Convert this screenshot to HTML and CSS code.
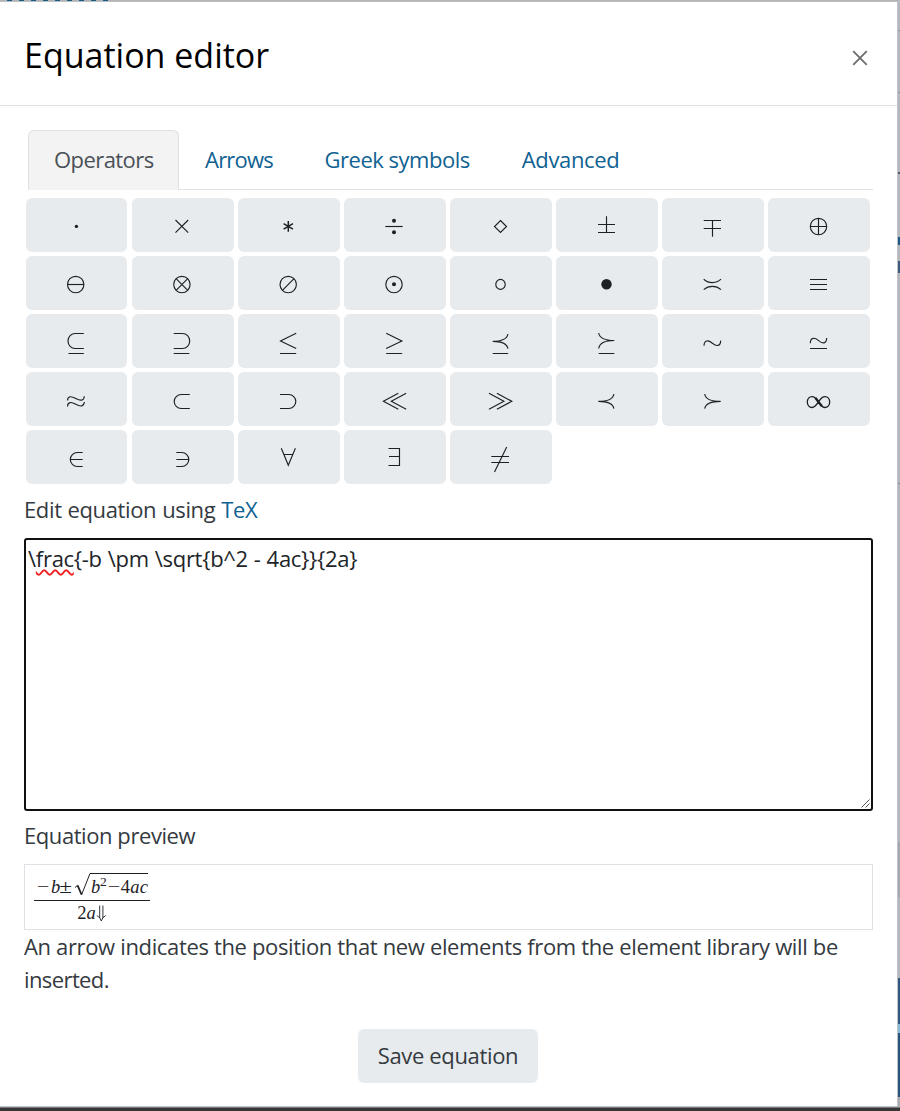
FILE: index.html
```html
<!DOCTYPE html>
<html lang="en">
<head>
<meta charset="utf-8">
<title>Equation editor</title>
<link rel="stylesheet" href="styles.css">
</head>
<body>
<div class="page-top"></div>
<main class="dialog">
  <header class="dialog-header">
    <h1 class="title">Equation editor</h1>
    <button class="close" aria-label="Close"><svg width="16" height="16" viewBox="0 0 16 16"><path d="M1.2 1.2 14.8 14.8M14.8 1.2 1.2 14.8"/></svg></button>
  </header>
  <section class="dialog-body">
    <nav class="tabs">
      <a class="tab active"><span class="t-operators">Operators</span></a>
      <a class="tab"><span class="t-arrows">Arrows</span></a>
      <a class="tab"><span class="t-greek">Greek symbols</span></a>
      <a class="tab"><span class="t-advanced">Advanced</span></a>
    </nav>
    <div class="library">
      <button class="op" aria-label="cdot"><svg viewBox="0 0 32 32"><circle class="dot" cx="15.4" cy="17.4" r="1.7"/></svg></button>
      <button class="op" aria-label="times"><svg viewBox="0 0 32 32"><path d="M8.5 11 21.2 23.7M21.2 11 8.5 23.7"/></svg></button>
      <button class="op" aria-label="ast"><svg viewBox="0 0 32 32"><path class="bold" d="M15.3 12V22.8M10.6 14.6 20 20.2M20 14.6 10.6 20.2"/></svg></button>
      <button class="op" aria-label="div"><svg viewBox="0 0 32 32"><path d="M6.3 17.5H23.7"/><circle class="dot" cx="15" cy="11.7" r="2"/><circle class="dot" cx="15" cy="23.3" r="2"/></svg></button>
      <button class="op" aria-label="diamond"><svg viewBox="0 0 32 32"><path d="M15.5 11.5 21.5 17.5 15.5 23.5 9.5 17.5Z"/></svg></button>
      <button class="op" aria-label="pm"><svg viewBox="0 0 32 32"><path d="M7 15.5H24M7 23.5H24M15.5 7.3V23.5"/></svg></button>
      <button class="op" aria-label="mp"><svg viewBox="0 0 32 32"><path d="M6.7 11.5H24M6.7 19.5H24M15.5 11.5V27.7"/></svg></button>
      <button class="op" aria-label="oplus"><svg viewBox="0 0 32 32"><circle cx="15.5" cy="17.5" r="8.2"/><path d="M7.3 17.5H23.7M15.5 9.3V25.7"/></svg></button>

      <button class="op" aria-label="ominus"><svg viewBox="0 0 32 32"><circle cx="14.7" cy="17.5" r="8.2"/><path d="M6.5 17.5H22.9"/></svg></button>
      <button class="op" aria-label="otimes"><svg viewBox="0 0 32 32"><circle cx="14.9" cy="17.5" r="8.2"/><path d="M9.1 11.7 20.7 23.3M20.7 11.7 9.1 23.3"/></svg></button>
      <button class="op" aria-label="oslash"><svg viewBox="0 0 32 32"><circle cx="15.2" cy="17.5" r="8.2"/><path d="M21 11.7 9.4 23.3"/></svg></button>
      <button class="op" aria-label="odot"><svg viewBox="0 0 32 32"><circle cx="15" cy="17.5" r="8.2"/><circle class="dot" cx="15" cy="17.3" r="2"/></svg></button>
      <button class="op" aria-label="circ"><svg viewBox="0 0 32 32"><ellipse cx="15.5" cy="17.4" rx="4.7" ry="5"/></svg></button>
      <button class="op" aria-label="bullet"><svg viewBox="0 0 32 32"><circle class="dot" cx="15.5" cy="17.2" r="5.2"/></svg></button>
      <button class="op" aria-label="asymp"><svg viewBox="0 0 32 32"><path d="M6.7 12.2Q10.5 15.6 15.4 15.6T24 12.2M6.7 22.6Q10.5 19.3 15.4 19.3T24 22.6"/></svg></button>
      <button class="op" aria-label="equiv"><svg viewBox="0 0 32 32"><path d="M7 12.5H24M7 17.5H24M7 22.5H24"/></svg></button>

      <button class="op" aria-label="subseteq"><svg viewBox="0 0 32 32"><path d="M22.8 8.5H14.2a7.2 7.5 0 0 0 0 15H22.8M7.5 28.5H22.8"/></svg></button>
      <button class="op" aria-label="supseteq"><svg viewBox="0 0 32 32"><path d="M6.7 8.5H15.5a7.2 7.5 0 0 1 0 15H6.7M6.7 28.5H22.3"/></svg></button>
      <button class="op" aria-label="leq"><svg viewBox="0 0 32 32"><path d="M23.2 8.2 7.5 15.9 23.2 23.6M7 28.5H23.2"/></svg></button>
      <button class="op" aria-label="geq"><svg viewBox="0 0 32 32"><path d="M7.2 8.2 22.9 15.9 7.2 23.6M7.2 28.5H23.2"/></svg></button>
      <button class="op" aria-label="preceq"><svg viewBox="0 0 32 32"><path d="M22.9 9Q21.8 16.3 7.7 16.3Q21.8 16.3 22.9 23.7M7.7 28.5H23.2"/></svg></button>
      <button class="op" aria-label="succeq"><svg viewBox="0 0 32 32"><path d="M7.7 8Q8.8 15.5 23.3 15.5Q8.8 15.5 7.7 23.5M7.7 28.5H23.3"/></svg></button>
      <button class="op" aria-label="sim"><svg viewBox="0 0 32 32"><path d="M7 20.8C7.2 14.8 11.2 14.8 15.4 18.2S23.4 21.6 23.7 15.6"/></svg></button>
      <button class="op" aria-label="simeq"><svg viewBox="0 0 32 32"><path d="M7.3 18.2C7.5 12.2 11.5 12.2 15.6 15.6S23.4 19 23.7 13M7 23.5H24"/></svg></button>

      <button class="op" aria-label="approx"><svg viewBox="0 0 32 32"><path d="M6.5 17.6C6.7 12.6 10.5 13.1 14.8 15.5S23 18.2 23.3 13.2M6.5 23.4C6.7 18.4 10.5 18.9 14.8 21.3S23 24 23.3 19"/></svg></button>
      <button class="op" aria-label="subset"><svg viewBox="0 0 32 32"><path d="M22.8 11.5H14.2a7 7 0 0 0 0 14H22.8"/></svg></button>
      <button class="op" aria-label="supset"><svg viewBox="0 0 32 32"><path d="M7 11.5H15.8a7 7 0 0 1 0 14H7"/></svg></button>
      <button class="op" aria-label="ll"><svg viewBox="0 0 32 32"><path d="M19.3 10.3 4.4 18.3 19.3 26.3M27.2 10.3 12.3 18.3 27.2 26.3"/></svg></button>
      <button class="op" aria-label="gg"><svg viewBox="0 0 32 32"><path d="M4 10.3 18.9 18.3 4 26.3M11.9 10.3 26.8 18.3 11.9 26.3"/></svg></button>
      <button class="op" aria-label="prec"><svg viewBox="0 0 32 32"><path d="M22.9 11Q21.8 18.4 7.3 18.4Q21.8 18.4 22.9 25.7"/></svg></button>
      <button class="op" aria-label="succ"><svg viewBox="0 0 32 32"><path d="M7.7 11Q8.8 18.4 23.7 18.4Q8.8 18.4 7.7 25.7"/></svg></button>
      <button class="op" aria-label="infty"><svg viewBox="0 0 32 32"><path class="loop" d="M15.5 18.8C13 15 11.7 13.6 9.2 13.6C6.2 13.6 4.3 16 4.3 19C4.3 22 6.2 24.5 9 24.5C12.2 24.5 13.5 22 15.5 18.8C17.5 15.7 18.8 13.6 22 13.6C24.8 13.6 26.7 16 26.7 19C26.7 22 24.8 24.5 21.8 24.5C19.3 24.5 18 22.7 15.5 18.8Z"/><path class="heavy" d="M12.3 14.8 18.9 23.2"/></svg></button>

      <button class="op" aria-label="in"><svg viewBox="0 0 32 32"><path d="M21.7 11.5H16.3a7 7 0 0 0 0 14H21.7M9.3 18.5H21.7"/></svg></button>
      <button class="op" aria-label="ni"><svg viewBox="0 0 32 32"><path d="M9.3 11.5H14.8a7 7 0 0 1 0 14H9.3M9.3 18.5H21.8"/></svg></button>
      <button class="op" aria-label="forall"><svg viewBox="0 0 32 32"><path d="M8.3 7.2 15.3 24.3 22.4 7.2M11 13.5H19.8"/></svg></button>
      <button class="op" aria-label="exists"><svg viewBox="0 0 32 32"><path d="M9.5 7.5H20.5V24.5H9.5M10 15.5H20.5"/></svg></button>
      <button class="op" aria-label="neq"><svg viewBox="0 0 32 32"><path d="M6.3 15.5H24M6.3 21.5H24M9.5 31 21.7 6"/></svg></button>
    </div>
    <p class="label edit-label"><span class="t-edit">Edit equation using <a class="link">TeX</a></span></p>
    <div class="editor"><span class="t-code">\<span class="misspelt">frac</span>{-b \pm \sqrt{b^2 - 4ac}}{2a}</span><svg class="grip" width="10" height="10" viewBox="0 0 10 10"><path d="M.5 8.5 8.5.5M4.5 8.5 8.5 4.5"/></svg></div>
    <p class="label preview-label"><span class="t-preview">Equation preview</span></p>
    <div class="preview">
      <div class="fraction">
        <div class="numerator"><span class="w-neg">−</span><i class="w-b">b</i><span class="w-pm">±</span><svg class="radical" width="17" height="24" viewBox="0 0 17 24"><path d="M1 14.5 3.6 12.3"/><path class="thick" d="M3.6 12.3 7.5 21.5"/><path d="M7.5 22 16 .5H17"/></svg><span class="radicand"><i class="w-b2">b</i><sup>2</sup><span class="w-minus">−</span><span class="w-four">4</span><i class="w-a">a</i><i>c</i></span></div>
        <div class="denominator"><span>2</span><i>a</i><svg class="cursor" width="11" height="17" viewBox="0 0 11 17"><path d="M3.7.5V13M6.9.5V13M.8 10.5Q4.3 12 5.3 16Q6.3 12 9.8 10.5"/></svg></div>
      </div>
    </div>
    <p class="hint"><span class="t-hint1">An arrow indicates the position that new elements from the element library will be</span><br><span class="t-hint2">inserted.</span></p>
    <div class="actions"><button class="save"><span class="t-save">Save equation</span></button></div>
  </section>
</main>
<aside class="page-right"></aside>
<footer class="page-bottom"></footer>
</body>
</html>
```
FILE: styles.css
```css
* { box-sizing: border-box; }

body {
  margin: 0;
  width: 900px;
  height: 1111px;
  overflow: hidden;
  display: grid;
  grid-template-columns: 898px 2px;
  grid-template-rows: 2px 1105px 4px;
  background: #fff;
  color: #343a40;
  font: 22px/33px "Open Sans", "Noto Sans", sans-serif;
}

p, h1 { margin: 0; }
button { border: 0; padding: 0; background: none; color: inherit; font: inherit; }
svg { display: block; fill: none; stroke: #1d2125; }
span[class^="t-"] { display: inline-block; white-space: nowrap; letter-spacing: -.35px; }
span.t-operators { letter-spacing: -.57px; }
span.t-arrows { letter-spacing: -.78px; }
span.t-greek { letter-spacing: -.48px; }
span.t-advanced { letter-spacing: -.38px; }
span.t-code { letter-spacing: -.28px; word-spacing: .5px; }
span.t-edit { word-spacing: .6px; letter-spacing: -.37px; }
span.t-preview { letter-spacing: -.43px; }
span.t-hint2 { letter-spacing: -.6px; }

.page-top {
  grid-column: 1 / 3;
  background:
    repeating-linear-gradient(90deg, #1a5a84 0 5px, transparent 5px 12px) 7px 0 / 104px 1px no-repeat,
    linear-gradient(#b3b6b9 1px, #bdbfc1 1px);
}
.page-right {
  background: linear-gradient(#b3b7bb 28px, #8b8f93 28px 29px, #b3b7bb 29px 90px, #8b8f93 90px 91px, #b3b7bb 91px 170px, #535f67 170px 172px, #b3b7bb 172px 235px, #1a5a84 235px 243px, #b3b7bb 243px 259px, #3b5c7e 259px 271px, #b3b7bb 271px 481px, #85898d 481px 482px, #b3b7bb 482px 840px, #a4a8ac 840px 895px, #b3b7bb 895px 976px, #315783 976px 1022px, #85bcd9 1022px 1031px, #285480 1031px 1095px, #a9adb0 1095px);
}
.page-bottom { grid-column: 1 / 3; background: #373737; border-top: 1px solid #777; }

.dialog { border-right: 1px solid #c2c4c6; border-bottom: 1px solid #c2c4c6; }
.dialog-header {
  height: 104px;
  padding: 2px 29px 0 24px;
  display: flex;
  align-items: center;
  justify-content: space-between;
  border-bottom: 1px solid #dee2e6;
}
.title { color: #000; font-size: 34px; font-weight: 400; line-height: 50px; }
.close { padding-top: 6px; }
.close svg { stroke: #6c6c6c; stroke-width: 1.8; }

.dialog-body { padding: 24px 24px 0; }

.tabs { display: flex; margin-left: 4px; height: 60px; border-bottom: 1px solid #dee2e6; }
.tab { padding: 12px 25px; height: 60px; border: 1px solid transparent; color: #0f6292; }
.tab:nth-child(3) { margin-left: -.5px; }
.tab.active {
  width: 151px;
  color: #495057;
  background: #f3f3f3;
  border-color: #dee2e6;
  border-bottom-color: #f3f3f3;
  border-radius: 6px 6px 0 0;
}

.library { display: grid; grid-template-columns: repeat(8, 102px); gap: 4px; padding: 8px 2px 0; }
.op { height: 54px; border-radius: 6px; background: #e8ebee; }
.op:nth-child(8n+1) { margin-right: 1px; }
.op svg { width: 32px; height: 32px; margin-left: 35px; stroke-width: 1.15; }
.bold { stroke-width: 1.5; }
.heavy { stroke-width: 2.3; }
.loop { stroke-width: 1.35; }
.dot { fill: #1d2125; stroke: none; }

.edit-label { margin-top: 9px; }
.link { color: #0f6292; }

.editor {
  position: relative;
  height: 273px;
  margin-top: 12px;
  padding: 2px;
  border: 2px solid #111;
  border-radius: 3px;
  color: #212529;
}
.misspelt { text-decoration: underline wavy #f02020 1.5px; text-underline-offset: 2px; text-decoration-skip-ink: none; }
.grip { position: absolute; right: 0; bottom: 0; stroke: #555; stroke-width: 1; }

.preview-label { margin-top: 8px; }
.preview { height: 66px; margin-top: 12px; padding: 8px 9px; border: 1px solid #dee2e6; }
.fraction { width: 116px; font: 18.5px/24px "Liberation Serif", serif; color: #1d2125; }
.numerator { display: flex; height: 28px; padding-left: 4px; border-bottom: 1px solid #1d2125; white-space: nowrap; }
.numerator > span, .numerator > i { padding-top: 2px; }
.w-neg { width: 13px; transform: scaleX(1.2); }
.w-b { width: 9px; }
.w-pm { width: 14px; transform: translateX(1px) scaleX(1.25); }
.radical { stroke-width: 1; }
.thick { stroke-width: 1.8; }
.numerator > .radicand { display: flex; height: 24px; border-top: 1px solid #1d2125; width: 57px; padding-top: 1px; }
.w-b2 { width: 9px; }
.radicand sup { font-size: 13.5px; line-height: 13px; width: 9px; vertical-align: baseline; }
.w-minus { width: 13px; transform: scaleX(1.2); }
.w-four { width: 10px; }
.w-a { width: 10px; }
.denominator { display: flex; justify-content: center; height: 24px; }
.cursor { margin-top: 4px; stroke-width: .9; }

.actions { display: flex; justify-content: center; margin-top: 33px; padding-right: 1px; }
.save { width: 180px; height: 54px; padding-bottom: 2px; border-radius: 6px; background: #e8ebee; }
```
